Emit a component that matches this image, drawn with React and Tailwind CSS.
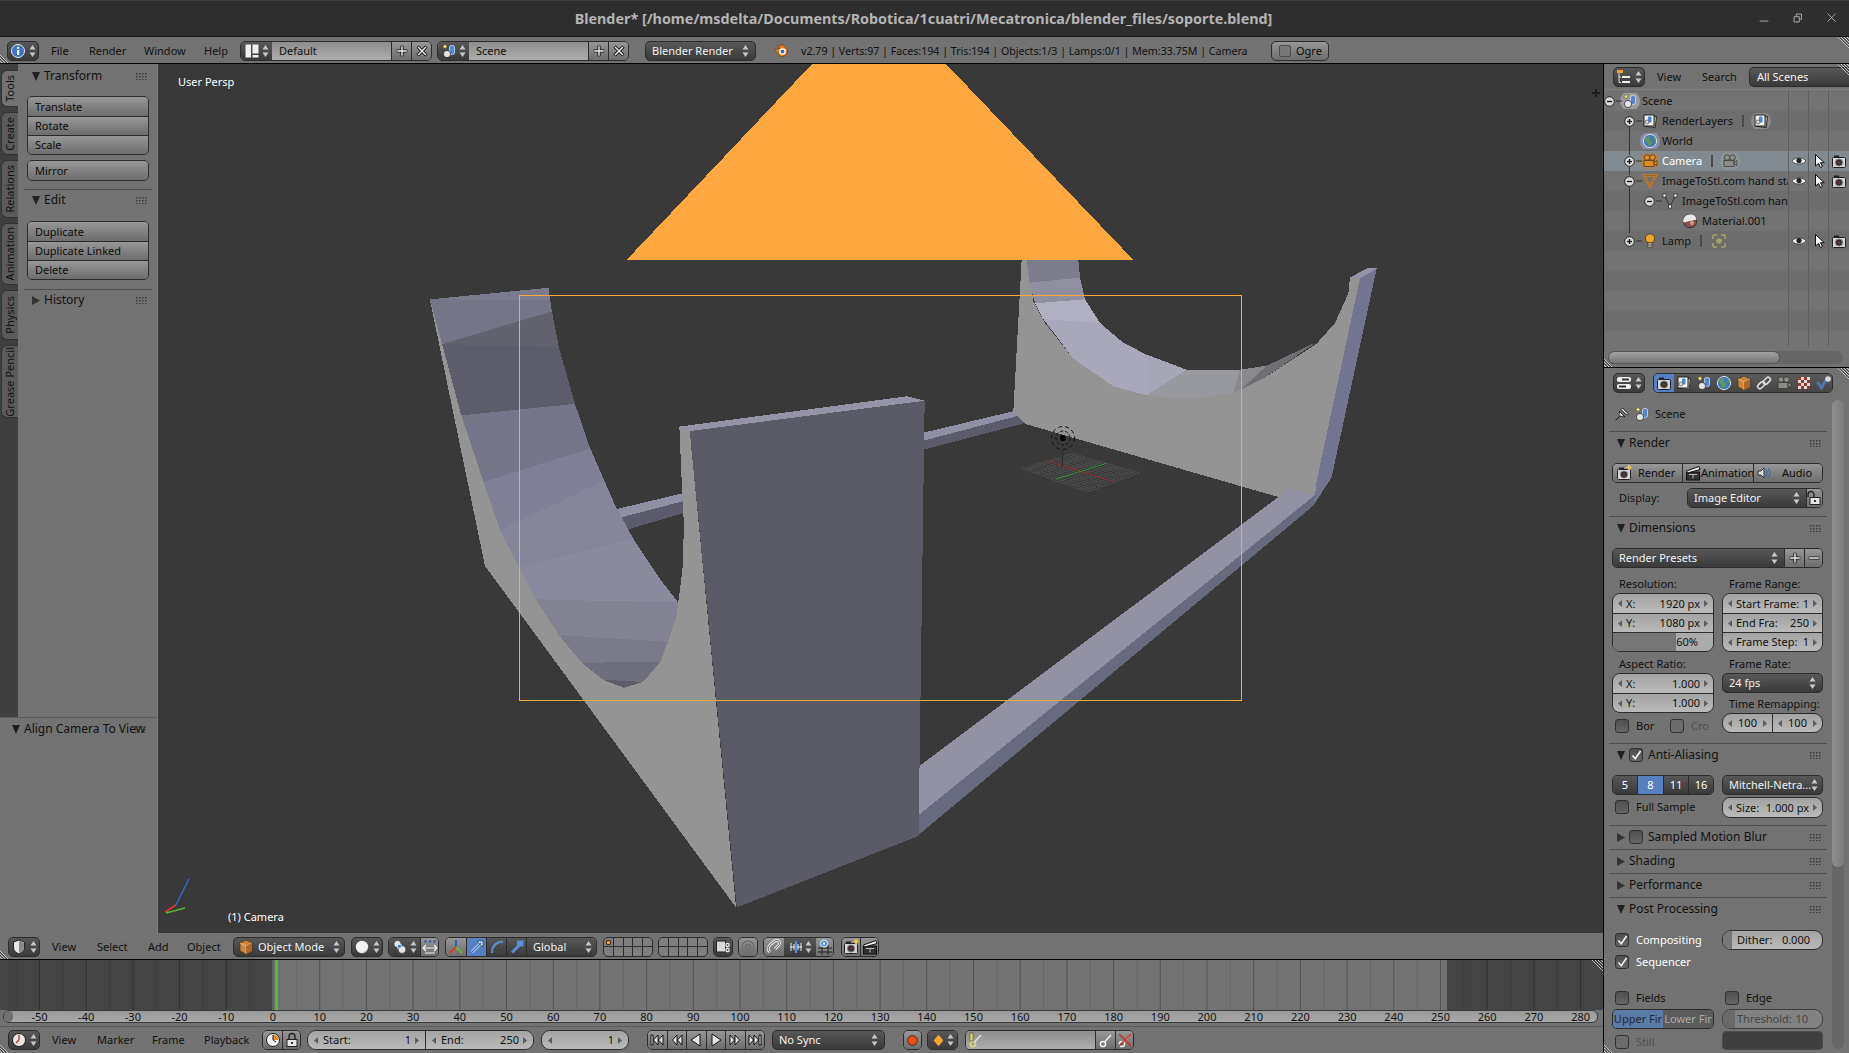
import React from "react";

const BTN = "bg-linear-to-b from-[#979797] to-[#6d6d6d] text-[#0c0c0c]";
const MENU = "bg-linear-to-b from-[#585858] to-[#3a3a3a] text-[#f2f2f2]";
const NUM = "bg-linear-to-b from-[#a3a3a3] to-[#bababa] text-[#111111]";
const TXT = "bg-linear-to-b from-[#8d8d8d] to-[#adadad] text-[#111111]";
const GRP = "flex h-[20px] border border-[#2c2c2c] rounded-[5px] overflow-hidden shrink-0";
const GRPR = "flex h-[20px] border border-[#2c2c2c] rounded-[9px] overflow-hidden shrink-0";
const SEP = "border-l border-[#2c2c2c]";
const CELL = "flex items-center justify-center h-full shrink-0";
const LCELL = "flex items-center h-full shrink-0";

const S = ({ s = 16, w, h, v = "0 0 16 16", c = "", children }) => (
  <svg width={w || s} height={h || s} viewBox={v} className={"shrink-0 " + c}>{children}</svg>
);

const UpDown = ({ c = "#c8c8c8" }) => (
  <S w={7} h={14} v="0 0 7 14"><polygon points="3.5,1 6.5,5.5 0.5,5.5" fill={c} /><polygon points="3.5,13 6.5,8.5 0.5,8.5" fill={c} /></S>
);
const TriD = () => <S w={8} h={9} v="0 0 8 9"><polygon points="0,0 8,0 4,9" fill="#202020" /></S>;
const TriR = () => <S w={8} h={9} v="0 0 8 9"><polygon points="0,0 8,4.5 0,9" fill="#333333" /></S>;
const Dots = () => (
  <S w={12} h={7} v="0 0 12 7">
    {[0, 3, 6, 9].map((x) => [0, 3, 6].map((y) => <rect key={x + "-" + y} x={x} y={y} width="1.5" height="1.5" fill="#3a3a3a" />))}
  </S>
);
const ArrL = ({ c = "#5d5d5d" }) => <S w={4} h={7} v="0 0 4 7"><polygon points="4,0 0,3.5 4,7" fill={c} /></S>;
const ArrR = ({ c = "#5d5d5d" }) => <S w={4} h={7} v="0 0 4 7"><polygon points="0,0 4,3.5 0,7" fill={c} /></S>;

const Info = () => <S><circle cx="8" cy="8" r="6.5" fill="#3f74c4" stroke="#e8e8e8" /><rect x="7" y="7" width="2.2" height="5" fill="#fff" /><rect x="7" y="3.8" width="2.2" height="2" fill="#fff" /></S>;
const Layout = () => <S><rect x="1.5" y="1.5" width="5.5" height="13" fill="#f0f0f0" /><rect x="8.5" y="1.5" width="6" height="9" fill="#f0f0f0" /><rect x="8.5" y="12" width="6" height="2.5" fill="#f0f0f0" /></S>;
const Plus = () => <S s={14}><path d="M8 2v12M2 8h12" stroke="#111" strokeWidth="3.6" /><path d="M8 2.5v11M2.5 8h11" stroke="#eee" strokeWidth="1.6" /></S>;
const Minus = () => <S s={14}><path d="M2 8h12" stroke="#111" strokeWidth="3.6" /><path d="M2.5 8h11" stroke="#eee" strokeWidth="1.6" /></S>;
const Cross = () => <S s={14}><path d="M3 3l10 10M13 3L3 13" stroke="#111" strokeWidth="3.6" /><path d="M3.5 3.5l9 9M12.5 3.5l-9 9" stroke="#eee" strokeWidth="1.6" /></S>;
const SceneI = ({ s = 16 }) => <S s={s}><rect x="8.5" y="2.5" width="5" height="9" rx="2" fill="#4b88d8" stroke="#dbe6f5" strokeWidth=".8" /><circle cx="6" cy="11" r="3.6" fill="#e4e4e4" stroke="#222" strokeWidth=".7" /><circle cx="4" cy="3.5" r="2" fill="#e8dc6a" stroke="#333" strokeWidth=".5" /></S>;
const Logo = () => <S><path d="M1 6.5l6-1.2L4.5 3l5-1.5 4 3.5c2 2.5 1 7-2.6 8.2-3 1-6-.5-6.4-3.7L1 6.5z" fill="#ea7a12" stroke="#4a2a08" strokeWidth=".5" /><circle cx="9.5" cy="8.5" r="3.3" fill="#fff" /><circle cx="9.5" cy="8.5" r="1.9" fill="#2f71b9" /></S>;
const Check = ({ on, dim }) => (
  <span className={"flex items-center justify-center w-[14px] h-[14px] rounded-[3px] border border-[#303030] shrink-0 " + (dim ? "bg-[#6c6c6c]" : "bg-linear-to-b from-[#4e4e4e] to-[#666666]")}>
    {on && <S s={13}><path d="M3 8l3.5 4L13 2.5" fill="none" stroke="#f5f5f5" strokeWidth="2" /></S>}
  </span>
);
const Cam = ({ s = 16, star }) => <S s={s}><rect x="1.5" y="4.5" width="13" height="10" rx="1" fill="#d4d4d4" stroke="#222" /><rect x="3" y="2.5" width="5" height="2.5" fill="#222" /><circle cx="8" cy="9.5" r="3.6" fill="#2c2c2c" stroke="#8c8c8c" /><circle cx="8" cy="9.5" r="1.2" fill="#7a3a34" />{star && <path d="M13 0v5M10.5 2.5h5" stroke="#f2c84b" strokeWidth="1.8" />}</S>;
const Clap = ({ s = 16 }) => <S s={s}><rect x="1.5" y="7" width="13" height="8" fill="#333" stroke="#111" /><path d="M1.5 6L14 1.5 15 4.5 2.5 8z" fill="#eee" stroke="#111" /><path d="M4 9.5h8M8 9.5v4" stroke="#bbb" /></S>;
const Speaker = () => <S><path d="M2 6h3l3-3v10l-3-3H2z" fill="#ddd" stroke="#333" /><path d="M10 5c1.5 1.6 1.5 4.4 0 6M12.3 3.5c2.3 2.6 2.3 6.4 0 9" fill="none" stroke="#3a6fb5" strokeWidth="1.4" /></S>;
const Lock = ({ open }) => <S><rect x="3" y="7.5" width="10" height="7" fill="#e4e4e4" stroke="#222" /><path d={open ? "M1 7V4.5a3 3 0 0 1 6 0V7" : "M5 7.5V4.5a3 3 0 0 1 6 0v3"} fill="none" stroke="#222" strokeWidth="1.4" /><rect x="7" y="10" width="2" height="2" fill="#333" /></S>;
const Pics = ({ s = 16 }) => <S s={s}><rect x="4" y="3" width="10" height="11" fill="#b9ad8f" stroke="#333" transform="rotate(8 9 8)" /><rect x="2" y="2" width="10" height="11" fill="#f1f1f1" stroke="#222" /><rect x="6" y="3.5" width="3.5" height="6" rx="1" fill="#4a86d6" /><circle cx="5" cy="9" r="2" fill="#ddd" stroke="#333" strokeWidth=".6" /></S>;
const Globe = ({ s = 16 }) => <S s={s}><circle cx="8" cy="8" r="6.6" fill="#3f78b8" stroke="#ddd" /><path d="M3 6c2-2 3-3 5-3 1 1-1 3 0 4s3 1 2 3-2 3-3 3-1-3-2-4-2 0-2-3z" fill="#5e9a56" /><path d="M11 4l2 1 1 3-2 0z" fill="#5e9a56" /></S>;
const MovieCam = ({ c = "#e58a1c", s = 16 }) => <S s={s}><circle cx="5" cy="4.5" r="2.8" fill={c} stroke="#332" strokeWidth=".7" /><circle cx="10.5" cy="4.5" r="2.8" fill={c} stroke="#332" strokeWidth=".7" /><rect x="2" y="7.5" width="10" height="6" fill={c} stroke="#332" strokeWidth=".7" /><path d="M12 9l3-1.5v5L12 11z" fill={c} stroke="#332" strokeWidth=".7" /></S>;
const TriMesh = () => <S><path d="M2 2.5h12L8 14z" fill="none" stroke="#e8851c" strokeWidth="2" /><path d="M2 2.5h12L8 14z" fill="none" stroke="#332" strokeWidth=".4" /></S>;
const VMesh = () => <S><path d="M2.5 2.5L8 13.5l5.5-11" fill="none" stroke="#333" /><rect x="1" y="1" width="3" height="3" fill="#fff" stroke="#222" strokeWidth=".7" /><rect x="12" y="1" width="3" height="3" fill="#fff" stroke="#222" strokeWidth=".7" /><rect x="6.5" y="12" width="3" height="3" fill="#fff" stroke="#222" strokeWidth=".7" /></S>;
const Ball = () => <S><circle cx="8" cy="8" r="6.8" fill="#8a4f49" stroke="#333" /><path d="M8 1.2A6.8 6.8 0 0 0 1.4 9.5L14.6 6.5A6.8 6.8 0 0 0 8 1.2z" fill="#e9e9e9" /><circle cx="10" cy="10" r="2" fill="#c99" /></S>;
const Bulb = () => <S><circle cx="8" cy="5.5" r="4.6" fill="#f0a428" stroke="#3a2a10" strokeWidth=".7" /><rect x="5.8" y="10" width="4.4" height="4" fill="#e8e0c8" stroke="#3a2a10" strokeWidth=".7" /><path d="M6 12h4" stroke="#3a2a10" /></S>;
const SunGhost = () => <S><path d="M2 2h4M2 2v4M14 2h-4M14 2v4M2 14h4M2 14v-4M14 14h-4M14 14v-4" stroke="#a5a26a" strokeWidth="1.6" fill="none" /><circle cx="8" cy="8" r="2.8" fill="#a5a26a" /></S>;
const Eye = () => <S><path d="M1 8c3-4 11-4 14 0-3 4-11 4-14 0z" fill="#f2f2f2" stroke="#222" strokeWidth=".6" /><circle cx="8" cy="7.6" r="2.6" fill="#222" /></S>;
const Cursor = () => <S><path d="M4.5 1.5v11.5l3-2.5 2 4 2-1-2-3.8h3.8z" fill="#f4f4f4" stroke="#111" /></S>;
const Exp = ({ plus }) => <S s={11} v="0 0 11 11"><circle cx="5.5" cy="5.5" r="4.8" fill="#d8d8d8" stroke="#222" /><path d="M3 5.5h5" stroke="#111" strokeWidth="1.3" />{plus && <path d="M5.5 3v5" stroke="#111" strokeWidth="1.3" />}</S>;
const Tree = () => <S><rect x="1" y="1" width="6" height="3" fill="#e8a33a" /><path d="M3 4v9.5h2M3 8h2" stroke="#ddd" fill="none" /><rect x="6" y="7" width="8" height="2" fill="#eee" /><rect x="6" y="12" width="8" height="2" fill="#eee" /></S>;
const PropsI = () => <S><rect x="1" y="2" width="14" height="5" rx="2" fill="#eee" /><rect x="1" y="9" width="14" height="5" rx="2" fill="#eee" /><rect x="6" y="3.5" width="7" height="2" fill="#333" /><rect x="3" y="10.5" width="7" height="2" fill="#333" /></S>;
const Cube = ({ s = 16 }) => <S s={s}><path d="M8 1l6 3v8l-6 3-6-3V4z" fill="#c9863e" stroke="#4a3010" strokeWidth=".7" /><path d="M2 4l6 3 6-3M8 7v8" stroke="#f2c58c" fill="none" strokeWidth=".8" /><path d="M8 7l6-3v8l-6 3z" fill="#a9692b" /></S>;
const LinkI = () => <S><rect x="1" y="8" width="8" height="4.5" rx="2.2" transform="rotate(-45 5 10)" fill="none" stroke="#ddd" strokeWidth="1.6" /><rect x="7" y="3.5" width="8" height="4.5" rx="2.2" transform="rotate(-45 11 6)" fill="none" stroke="#ddd" strokeWidth="1.6" /></S>;
const Checker = () => <S>{[0, 1, 2, 3].map((i) => [0, 1, 2, 3].map((j) => <rect key={i + "" + j} x={2 + i * 3} y={2 + j * 3} width="3" height="3" fill={(i + j) % 2 ? "#e8d9d4" : "#8c3a34"} />))}</S>;
const Tick = () => <S><path d="M1.5 7l4 6L11 3" fill="none" stroke="#4c78b8" strokeWidth="2.6" /><circle cx="12" cy="4" r="2.8" fill="#d8d8d8" /></S>;
const Pin = () => <S><path d="M1.5 14.5L7 9M5 5l6 6M7 3.5l5.5 5.5 1.5-1.5L8.5 2z" stroke="#111" fill="#eee" strokeWidth="1" /><path d="M6 6l4 4-3 .5-2-2z" fill="#eee" stroke="#111" strokeWidth=".8" /></S>;
const Shield = () => <S><path d="M2.5 3l5.5-2 5.5 2v6c0 3-3 5-5.5 6-2.5-1-5.5-3-5.5-6z" fill="#e8e8e8" stroke="#222" /><path d="M8 1.5v13c2.5-1 5-3 5-5.5V3.4z" fill="#8c8c8c" /></S>;
const Sphere = () => <S><circle cx="8" cy="8" r="6.2" fill="#f2f2f2" /><path d="M8 14.2A6.2 6.2 0 0 0 14.2 8c-1 3-4 5-6.2 6.2z" fill="#aaa" /></S>;
const PivotI = () => <S><circle cx="5.5" cy="5" r="3.6" fill="#e4e4e4" stroke="#222" strokeWidth=".6" /><circle cx="10" cy="10.5" r="3.9" fill="#e4e4e4" stroke="#222" strokeWidth=".6" /><rect x="5.5" y="5.5" width="3.6" height="3.6" fill="#3a7fd6" stroke="#fff" strokeWidth=".6" /></S>;
const Spread = () => <S><circle cx="3.5" cy="2.5" r="1.3" fill="#3a5fa0" /><circle cx="8" cy="2.5" r="1.3" fill="#3a5fa0" /><circle cx="12.5" cy="2.5" r="1.3" fill="#3a5fa0" /><path d="M1 9h14M1 9l3-3M1 9l3 3M15 9l-3-3M15 9l-3 3M3 14h10" stroke="#f4f4f4" strokeWidth="1.2" fill="none" /></S>;
const Axes = () => <S><path d="M8 8V1" stroke="#2f5fc2" strokeWidth="2" /><path d="M8 8l-6 6" stroke="#d43c2a" strokeWidth="2" /><path d="M8 8l6 6" stroke="#6cb62c" strokeWidth="2" /></S>;
const ArrowI = () => <S><path d="M3 13L12 4" stroke="#d9e8ff" strokeWidth="3" /><path d="M8 2h6v6z" fill="#d9e8ff" stroke="#123" strokeWidth=".6" /><path d="M3 13L12 4" stroke="#2f5fc2" strokeWidth="1.2" /></S>;
const RotI = () => <S><path d="M3 14C3 7 7 3 14 2.5" fill="none" stroke="#5d8fd4" strokeWidth="2" /></S>;
const ScaleI = () => <S><path d="M3 13.5L10 6.5" stroke="#5d8fd4" strokeWidth="3" /><rect x="8" y="1.5" width="6.5" height="6" fill="#5d8fd4" /></S>;
const LockCam = () => <S><rect x="1.5" y="2" width="9" height="11" fill="#d8d8d8" stroke="#222" /><path d="M11 5a2 2 0 0 1 3 0v2a2 2 0 0 1-3 0zM11 10a2 2 0 0 1 3 0v2a2 2 0 0 1-3 0z" fill="none" stroke="#eee" strokeWidth="1.2" /></S>;
const Prop = () => <S><circle cx="8" cy="8" r="6" fill="none" stroke="#6e6e6e" strokeWidth="1.6" /><circle cx="8" cy="8" r="3" fill="#787878" stroke="#6a6a6a" /></S>;
const Magnet = () => <S><path d="M4 13l-1.5-1.5c-1-2 0-4 2-6L8 2.5c2-1.5 4-1.5 5 0s.5 3-1 4.5L9 10" fill="none" stroke="#e2e2e2" strokeWidth="3" /><path d="M4 13l-1.5-1.5c-1-2 0-4 2-6L8 2.5c2-1.5 4-1.5 5 0s.5 3-1 4.5L9 10" fill="none" stroke="#333" strokeWidth=".7" /></S>;
const Snap = () => <S><path d="M2 8h12" stroke="#eee" /><path d="M3 4v8M6 5v6M10 5v6M13 4v8" stroke="#eee" /><rect x="7" y="2" width="2" height="12" fill="#4a8fe8" /></S>;
const SnapT = () => <S><path d="M1 9h14M1 13h14M5 6v10M11 6v10" stroke="#222" /><circle cx="7" cy="4.5" r="3.6" fill="#4a8fe8" stroke="#eee" /><circle cx="7" cy="4.5" r="1.2" fill="#fff" /></S>;
const Clock = () => <S><circle cx="8" cy="8" r="6.5" fill="#f2f2f2" stroke="#222" /><path d="M8 8V2.5A5.5 5.5 0 0 1 13.5 8z" fill="#f08c1e" /><path d="M8 8V3M8 8l3 2" stroke="#222" /></S>;
const ClockDark = () => <S><circle cx="8" cy="8" r="6.5" fill="#e8e8e8" stroke="#222" /><path d="M8 8V3M8 8l-3 3" stroke="#b33" strokeWidth="1.4" /></S>;
const Tr = ({ d }) => <S s={16} v="0 0 16 16"><path d={d} fill="#e6e6e6" stroke="#111" strokeWidth="1" /></S>;
const Key = () => <S><circle cx="5" cy="12" r="2.6" fill="none" stroke="#e2d66d" strokeWidth="1.5" /><path d="M6.5 10L13 3" stroke="#ddd" strokeWidth="1.6" /><rect x="2" y="1" width="3" height="8" fill="#e2d66d" stroke="#333" strokeWidth=".5" /></S>;
const KeyAdd = () => <S><circle cx="5" cy="12" r="2.6" fill="none" stroke="#eee" strokeWidth="1.5" /><path d="M6.5 10L13 3" stroke="#eee" strokeWidth="1.6" /></S>;
const KeyDel = () => <S><circle cx="5" cy="12" r="2.6" fill="none" stroke="#eee" strokeWidth="1.5" /><path d="M6.5 10L13 3" stroke="#eee" strokeWidth="1.6" /><path d="M2 2l12 12M14 2L2 14" stroke="#c8322a" strokeWidth="1.6" /></S>;

const Hatch = ({ pos, flip }) => (
  <svg width="11" height="11" viewBox="0 0 11 11" className={"absolute " + pos}>
    {flip
      ? <g stroke="#e0e0e0" strokeWidth=".8"><path d="M0 3l8 8M0 6l5 5M0 9l2 2" /><path d="M0 4l7 7M0 7l4 4" stroke="#333" /></g>
      : <g stroke="#e0e0e0" strokeWidth=".8"><path d="M0 0l11 11M3 0l8 8M6 0l5 5M9 0l2 2" /><path d="M1 0l10 10M4 0l7 7M7 0l4 4" stroke="#333" /></g>}
  </svg>
);

const EditorBtn = ({ children }) => (
  <div className={"flex items-center justify-center gap-[3px] w-[32px] h-[20px] rounded-[5px] border border-[#2c2c2c] shrink-0 " + MENU}>
    {children}<UpDown />
  </div>
);
const Dropdown = ({ cls, icon, label }) => (
  <div className={"flex items-center h-[20px] rounded-[5px] border border-[#2c2c2c] shrink-0 whitespace-nowrap " + MENU + " " + cls}>
    {icon}<span className="flex-1">{label}</span><UpDown />
  </div>
);
const Item = ({ cls, children }) => <div className={"shrink-0 text-[#111111] " + cls}>{children}</div>;

function IdBlock({ icon, label, txtW }) {
  return (
    <div className={GRP + " w-[192px]"}>
      <div className={CELL + " w-[31px] gap-[2px] " + MENU}>{icon}<UpDown /></div>
      <div className={LCELL + " pl-[7px] " + TXT + " " + txtW}>{label}</div>
      <div className={CELL + " w-[20px] " + BTN + " " + SEP}><Plus /></div>
      <div className={CELL + " w-[20px] " + BTN + " " + SEP}><Cross /></div>
    </div>
  );
}

function TitleBar() {
  return (
    <div className="relative flex items-center justify-center h-[37px] bg-[#2e2e2e] border-t border-t-[#3c3c3c] border-b border-b-[#151515] shrink-0">
      <span className="text-[14.35px] font-bold text-[#b4b4b4] font-['Noto_Sans',sans-serif] whitespace-nowrap pr-[2px]">
        Blender* [/home/msdelta/Documents/Robotica/1cuatri/Mecatronica/blender_files/soporte.blend]
      </span>
      <div className="absolute right-[10px] top-[10px] flex items-center gap-[20px]">
        <S s={14}><path d="M3 11.5h10" stroke="#b8b8b8" strokeWidth="1" /></S>
        <S s={14}><path d="M3.5 6.5h6v6h-6zM6 6V3.5h6v6H10" fill="none" stroke="#b8b8b8" strokeWidth="1" /></S>
        <S s={14}><path d="M3 3l9 9M12 3l-9 9" stroke="#b8b8b8" strokeWidth="1" /></S>
      </div>
    </div>
  );
}

function InfoBar() {
  return (
    <div className="relative flex items-center h-[26px] pt-[2px] bg-[#727272] shrink-0">
      <Hatch pos="left-0 bottom-0" flip />
      <Hatch pos="right-0 top-0" />
      <div className="ml-[7px]"><EditorBtn><Info /></EditorBtn></div>
      <Item cls="ml-[12px] w-[38px]">File</Item>
      <Item cls="w-[55px]">Render</Item>
      <Item cls="w-[60px]">Window</Item>
      <Item cls="w-[36px]">Help</Item>
      <IdBlock icon={<Layout />} label="Default" txtW="w-[119px]" />
      <div className="ml-[5px]"><IdBlock icon={<SceneI />} label="Scene" txtW="w-[119px]" /></div>
      <div className="ml-[16px]"><Dropdown cls="w-[111px] px-[6px]" label="Blender Render" /></div>
      <div className="ml-[17px]"><Logo /></div>
      <Item cls="ml-[12px] w-[470px] whitespace-nowrap text-[10.63px]">v2.79 | Verts:97 | Faces:194 | Tris:194 | Objects:1/3 | Lamps:0/1 | Mem:33.75M | Camera</Item>
      <div className={"flex items-center w-[58px] h-[20px] rounded-[5px] border border-[#2c2c2c] pl-[7px] gap-[5px] " + BTN}>
        <span className="w-[12px] h-[12px] border border-[#4a4a4a] bg-[#777777] rounded-[2px]" />Ogre
      </div>
    </div>
  );
}

const Tab = ({ cls, on, children }) => (
  <div className={"flex items-center justify-center w-[17px] ml-[1px] rounded-l-[6px] border border-r-0 border-[#333333] text-[#111111] " + (on ? "bg-[#727272] " : "bg-[#5b5b5b] ") + cls}>
    <span className="[writing-mode:vertical-rl] rotate-180 whitespace-nowrap text-[11px]">{children}</span>
  </div>
);
const PanelHead = ({ open, label, check }) => (
  <div className="relative flex items-center h-[20px] pl-[5px] text-[12px] text-[#111111] shrink-0 whitespace-nowrap">
    {open ? <TriD /> : <TriR />}
    {check !== undefined && <span className="ml-[4px] -mr-[1px]"><Check on={check} /></span>}
    <span className={check !== undefined ? "ml-[6px]" : "ml-[4px]"}>{label}</span>
    <span className="absolute right-[1px] top-[7px]"><Dots /></span>
  </div>
);
const Line = ({ cls }) => <div className={"h-px bg-[#4e4e4e] shrink-0 " + cls} />;
const BtnStack = ({ labels, cls }) => (
  <div className={"flex flex-col border border-[#2c2c2c] rounded-[5px] overflow-hidden shrink-0 " + cls}>
    {labels.map((l, i) => (
      <div key={l} className={"flex items-center h-[19px] pl-[7px] " + BTN + (i ? " border-t border-[#2c2c2c]" : "")}>{l}</div>
    ))}
  </div>
);

function ToolShelf() {
  return (
    <div className="flex flex-col w-[158px] shrink-0 h-full">
      <div className="flex flex-1 min-h-0">
        <div className="flex flex-col w-[18px] bg-[#404040] pt-[6px] gap-[5px] overflow-hidden">
          <Tab cls="h-[37px]" on>Tools</Tab>
          <Tab cls="h-[43px]">Create</Tab>
          <Tab cls="h-[58px]">Relations</Tab>
          <Tab cls="h-[62px]">Animation</Tab>
          <Tab cls="h-[50px]">Physics</Tab>
          <Tab cls="h-[73px]">Grease Pencil</Tab>
        </div>
        <div className="w-[140px] bg-[#727272] border-r border-[#808080] pl-[9px] pr-[8px] pt-[2px] flex flex-col">
          <PanelHead open label="Transform" />
          <BtnStack cls="mt-[10px]" labels={["Translate", "Rotate", "Scale"]} />
          <BtnStack cls="mt-[5px]" labels={["Mirror"]} />
          <Line cls="mt-[8px] -ml-[3px] -mr-[3px]" />
          <PanelHead open label="Edit" />
          <BtnStack cls="mt-[11px]" labels={["Duplicate", "Duplicate Linked", "Delete"]} />
          <Line cls="mt-[9px] -ml-[3px] -mr-[3px]" />
          <PanelHead label="History" />
        </div>
      </div>
      <div className="h-[216px] bg-[#727272] border-t border-[#5c5c5c] border-r-[#808080] border-r pl-[7px] pr-[9px] pt-[1px]">
        <PanelHead open label="Align Camera To View" />
      </div>
    </div>
  );
}

const za = (pts) => pts.map(([x, y]) => `${400 + x / 2.613},${240 + y / 2.24}`).join(" ");
const zb = (pts) => pts.map(([x, y]) => `${900 + x / 3},${240 + y / 2.529}`).join(" ");

function Scene3D() {
  const gridLines = [];
  const A = [1021.7, 468.5], B = [1073, 453.5], C = [1140, 473], D = [1087, 492];
  const mix = (p, q, t) => [p[0] + (q[0] - p[0]) * t, p[1] + (q[1] - p[1]) * t];
  for (let i = 0; i <= 16; i++) {
    const t = i / 16;
    const p1 = mix(A, B, t), p2 = mix(D, C, t), p3 = mix(A, D, t), p4 = mix(B, C, t);
    gridLines.push(<line key={"g" + i} x1={p1[0]} y1={p1[1]} x2={p2[0]} y2={p2[1]} stroke="#4f4f4f" strokeWidth=".7" />);
    gridLines.push(<line key={"h" + i} x1={p3[0]} y1={p3[1]} x2={p4[0]} y2={p4[1]} stroke="#4f4f4f" strokeWidth=".7" />);
  }
  return (
    <svg className="absolute inset-0 w-full h-full" viewBox="158 64 1445 869" shapeRendering="crispEdges">
      {gridLines}
      <line x1="1048" y1="460.6" x2="1113" y2="482" stroke="#8a2a2a" strokeWidth="1" />
      <line x1="1056" y1="479" x2="1106" y2="463.4" stroke="#2f8a2f" strokeWidth="1" />
      {/* back rails */}
      <polygon points={za([[565, 603], [740, 567], [740, 585], [575, 622]])} fill="#9090a4" />
      <polygon points={za([[575, 622], [740, 585], [740, 612], [596, 648]])} fill="#5b5b6c" />
      <polygon points={zb([[72, 487], [340, 433], [375, 440], [72, 507]])} fill="#9090a4" />
      <polygon points={zb([[72, 507], [375, 440], [375, 463], [72, 530]])} fill="#5b5b6c" />
      {/* right wall */}
      <polygon points={zb([[1350, 95], [1400, 72], [1430, 72], [1380, 97]])} fill="#9494a6" />
      <polygon points={zb([[1380, 97], [1430, 72], [1295, 600], [1240, 672], [1245, 645], [1250, 610]])} fill="#737590" />
      <polygon points={zb([[365, 50], [380, 50], [400, 155], [435, 210], [520, 300], [640, 370], [740, 393], [870, 403], [1000, 387], [1100, 345], [1250, 262], [1305, 210], [1345, 135], [1350, 95], [1380, 97], [1250, 610], [1245, 645], [1165, 628], [1135, 650], [375, 465], [340, 433]])} fill="#949494" />
      <polygon points={zb([[380, 50], [535, 50], [540, 95], [388, 108]])} fill="#7d7d8c" />
      <polygon points={zb([[388, 108], [540, 95], [555, 150], [405, 160]])} fill="#8f8f9f" />
      <polygon points={zb([[405, 160], [555, 150], [600, 210], [430, 200]])} fill="#b0b0c2" />
      <polygon points={zb([[430, 200], [600, 210], [670, 260], [740, 290], [740, 393], [640, 370], [520, 300]])} fill="#a8a8ba" />
      <polygon points={zb([[740, 290], [860, 328], [740, 393]])} fill="#a6a6b6" />
      <polygon points={zb([[740, 393], [860, 328], [1020, 328], [1000, 387], [870, 403]])} fill="#98989f" />
      <polygon points={zb([[1000, 387], [1020, 328], [1100, 318], [1100, 345]])} fill="#8a8a8e" />
      <polygon points={zb([[1020, 380], [1100, 318], [1250, 258], [1100, 345]])} fill="#707074" />
      {/* front rail */}
      <polygon points={zb([[55, 1332], [1135, 650], [1165, 628], [1245, 645], [55, 1455]])} fill="#9292a4" />
      <polygon points={zb([[55, 1455], [1245, 645], [1240, 672], [55, 1505]])} fill="#686a80" />
      {/* left wing */}
      <polygon points={za([[78, 133], [222, 730], [878, 1495], [757, 428], [730, 418], [735, 520], [742, 640], [738, 740], [727, 812], [722, 845], [700, 900], [680, 945], [635, 990], [585, 1003], [530, 985], [475, 947], [415, 885], [355, 805], [312, 735], [262, 650], [218, 542], [160, 393], [110, 233]])} fill="#949494" />
      <polygon points={za([[78, 133], [388, 107], [397, 160], [110, 233]])} fill="#747587" />
      <polygon points={za([[78, 133], [388, 107], [392, 135]])} fill="#7a7b8e" />
      <polygon points={za([[110, 233], [397, 160], [415, 240], [457, 367], [160, 393]])} fill="#5c5c6a" />
      <polygon points={za([[110, 233], [397, 160], [415, 240]])} fill="#62626f" />
      <polygon points={za([[160, 393], [457, 367], [497, 467], [218, 542]])} fill="#757689" />
      <polygon points={za([[218, 542], [497, 467], [560, 590], [610, 670], [312, 735], [262, 650]])} fill="#85859a" />
      <polygon points={za([[218, 542], [497, 467], [530, 540], [262, 650]])} fill="#7f7f95" />
      <polygon points={za([[312, 735], [610, 670], [680, 760], [727, 812], [355, 805]])} fill="#8a8a9e" />
      <polygon points={za([[355, 805], [727, 812], [722, 845], [700, 900], [415, 885]])} fill="#828292" />
      <polygon points={za([[415, 885], [700, 900], [680, 945], [475, 947]])} fill="#7a7a8a" />
      <polygon points={za([[475, 947], [680, 945], [635, 990], [530, 985]])} fill="#6e6e7c" />
      <polygon points={za([[530, 985], [635, 990], [585, 1003]])} fill="#5d5d6a" />
      {/* slab */}
      <polygon points={za([[730, 418], [1325, 350], [1371, 360], [757, 428]])} fill="#9494a6" />
      <polygon points={za([[757, 428], [1371, 360], [1355, 1335], [880, 1495]])} fill="#5b5b67" />
      {/* camera */}
      <polygon points="812,64 946,64 1133,259.5 627,259.5" fill="#ffa83f" />
      <rect x="519.5" y="295.5" width="722" height="405" fill="none" stroke="#ffa83f" strokeWidth="1" />
      {/* lamp */}
      <g fill="none" stroke="#111" strokeWidth="1" shapeRendering="auto">
        <circle cx="1063" cy="438" r="7" strokeDasharray="3 2" />
        <circle cx="1063" cy="438" r="11.5" strokeDasharray="4 3" />
      </g>
      <circle cx="1063" cy="438" r="3" fill="#000" shapeRendering="auto" />
      <line x1="1062" y1="450" x2="1062" y2="466" stroke="#2a2a2a" />
      {/* axis */}
      <g shapeRendering="auto">
        <line x1="176" y1="905" x2="189" y2="879" stroke="#3a66c8" strokeWidth="1.6" />
        <line x1="176" y1="905" x2="165" y2="912" stroke="#d83c2a" strokeWidth="1.6" />
        <line x1="166" y1="913" x2="185" y2="908" stroke="#58b03a" strokeWidth="1.6" />
      </g>
      <line x1="1592" y1="93" x2="1600" y2="93" stroke="#1e1e1e" strokeWidth="2" />
      <line x1="1596" y1="89" x2="1596" y2="97" stroke="#1e1e1e" strokeWidth="2" />
    </svg>
  );
}

function Viewport() {
  return (
    <div className="relative flex-1 bg-[#393939] overflow-hidden">
      <Scene3D />
      <div className="absolute left-[20px] top-[11px] text-white">User Persp</div>
      <div className="absolute left-[70px] bottom-[9px] text-white">(1) Camera</div>
    </div>
  );
}

const LayerGrid = ({ cls, dot }) => (
  <div className={"relative grid grid-cols-5 grid-rows-2 h-[20px] border border-[#2c2c2c] rounded-[5px] overflow-hidden bg-[#2c2c2c] gap-px shrink-0 " + cls}>
    {Array.from({ length: 10 }).map((_, i) => <div key={i} className="bg-[#7e7e7e]" />)}
    {dot && <span className="absolute left-[2px] top-[2px] w-[5px] h-[5px] bg-[#e89a3c] border border-[#4a2a08] rounded-[1px]" />}
  </div>
);

function Header3D() {
  return (
    <div className="relative flex items-center h-[26px] pt-[1px] bg-[#727272] shrink-0">
      <Hatch pos="left-0 bottom-0" flip />
      <div className="ml-[8px]"><EditorBtn><Shield /></EditorBtn></div>
      <Item cls="ml-[12px] w-[45px]">View</Item>
      <Item cls="w-[51px]">Select</Item>
      <Item cls="w-[39px]">Add</Item>
      <Item cls="w-[46px]">Object</Item>
      <Dropdown cls="w-[112px] gap-[4px] px-[4px]" icon={<Cube />} label="Object Mode" />
      <div className="ml-[6px]"><EditorBtn><Sphere /></EditorBtn></div>
      <div className={"ml-[5px] w-[51px] " + GRP}>
        <div className={CELL + " w-[31px] gap-[2px] " + MENU}><PivotI /><UpDown /></div>
        <div className={CELL + " flex-1 " + BTN + " " + SEP}><Spread /></div>
      </div>
      <div className={"ml-[6px] w-[152px] " + GRP}>
        <div className={CELL + " w-[20px] " + BTN}><Axes /></div>
        <div className={CELL + " w-[20px] bg-[#5680c2] " + SEP}><ArrowI /></div>
        <div className={CELL + " w-[20px] " + MENU + " " + SEP}><RotI /></div>
        <div className={CELL + " w-[20px] " + MENU + " " + SEP}><ScaleI /></div>
        <div className={"flex items-center justify-between h-full flex-1 pl-[6px] pr-[4px] " + MENU + " " + SEP}>Global<UpDown /></div>
      </div>
      <LayerGrid cls="ml-[6px] w-[50px]" dot />
      <LayerGrid cls="ml-[5px] w-[50px]" />
      <div className={"ml-[5px] w-[20px] " + GRP}><div className={CELL + " w-full " + MENU}><LockCam /></div></div>
      <div className={"ml-[5px] w-[20px] " + GRP}><div className={CELL + " w-full " + BTN}><Prop /></div></div>
      <div className={"ml-[5px] w-[71px] " + GRP}>
        <div className={CELL + " w-[20px] " + BTN}><Magnet /></div>
        <div className={CELL + " w-[32px] gap-[1px] " + MENU}><Snap /><UpDown /></div>
        <div className={CELL + " flex-1 " + BTN}><SnapT /></div>
      </div>
      <div className={"ml-[7px] w-[38px] " + GRP}>
        <div className={CELL + " w-[18px] " + BTN}><Cam star /></div>
        <div className={CELL + " flex-1 " + BTN + " " + SEP}><Clap /></div>
      </div>
    </div>
  );
}

const X0 = 273, PF = 4.67;
const TICKS = Array.from({ length: 34 }, (_, i) => -50 + i * 10);

function Timeline() {
  const lines = [];
  for (let f = -55; f <= 285; f += 5) {
    const x = X0 + f * PF;
    lines.push(<line key={f} x1={x} y1="0" x2={x} y2="50" stroke={f % 10 === 0 ? "rgba(0,0,0,0.28)" : "rgba(0,0,0,0.1)"} strokeWidth="1" />);
  }
  return (
    <div className="shrink-0">
      <div className="h-px bg-black" />
      <div className="relative flex h-[50px] bg-[#727272]">
        <div className="w-[272px] bg-[#444444] shrink-0" />
        <div className="flex-1" />
        <div className="w-[156px] bg-[#444444] shrink-0" />
        <svg className="absolute inset-0 w-full h-full" viewBox="0 0 1603 50">{lines}</svg>
        <div className="absolute left-[275px] top-0 bottom-0 w-[3px] bg-[#58b83a]" />
        <Hatch pos="right-0 top-0" />
      </div>
      <div className="bg-[#727272] h-[13px]">
        <div className={"relative h-[13px] ml-[3px] mr-[5px] rounded-[6px] border border-[#3a3a3a] overflow-visible bg-linear-to-b from-[#9a9a9a] to-[#a8a8a8]"}>
          <div className="absolute left-0 top-0 bottom-0 w-[9px] rounded-full bg-[#707070]" />
          {TICKS.map((t) => (
            <span key={t} className="absolute top-0 leading-[11px] -translate-x-1/2 text-[11px] text-[#111111]" style={{ left: X0 - 3 - 1 + t * PF }}>{t}</span>
          ))}
        </div>
      </div>
      <div className="h-[4px] bg-[#727272] border-b border-[#5c5c5c]" />
    </div>
  );
}

function HeaderTime() {
  const T = [
    "M2 3v10h2V3zM9 3L4.5 8 9 13zM14 3L9.5 8l4.5 5z",
    "M8 3L3.5 8 8 13zM13 3L8.5 8l4.5 5z",
    "M12 2L3 8l9 6z",
    "M4 2l9 6-9 6z",
    "M3 3l4.5 5L3 13zM8 3l4.5 5L8 13z",
    "M12 3v10h2V3zM2 3l4.5 5L2 13zM7 3l4.5 5L7 13z",
  ];
  return (
    <div className="relative flex items-center h-[26px] bg-[#727272] shrink-0">
      <Hatch pos="left-0 bottom-0" flip />
      <div className="ml-[8px]"><EditorBtn><ClockDark /></EditorBtn></div>
      <Item cls="ml-[12px] w-[45px]">View</Item>
      <Item cls="w-[55px]">Marker</Item>
      <Item cls="w-[52px]">Frame</Item>
      <Item cls="w-[58px]">Playback</Item>
      <div className={"w-[39px] " + GRP}>
        <div className={CELL + " w-[19px] " + BTN}><Clock /></div>
        <div className={CELL + " flex-1 " + BTN + " " + SEP}><Lock /></div>
      </div>
      <div className={"ml-[6px] w-[227px] " + GRPR}>
        <div className={"flex items-center w-[117px] h-full px-[6px] shrink-0 " + NUM}><ArrL /><span className="ml-[5px]">Start:</span><span className="ml-auto">1</span><span className="ml-[4px]"><ArrR /></span></div>
        <div className={"flex items-center flex-1 h-full px-[6px] " + NUM + " " + SEP}><ArrL /><span className="ml-[5px]">End:</span><span className="ml-auto">250</span><span className="ml-[4px]"><ArrR /></span></div>
      </div>
      <div className={"ml-[7px] w-[88px] " + GRPR}>
        <div className={"flex items-center w-full h-full px-[6px] " + NUM}><ArrL /><span className="ml-auto">1</span><span className="ml-[4px]"><ArrR /></span></div>
      </div>
      <div className={"ml-[18px] w-[118px] " + GRP}>
        {T.map((d, i) => <div key={i} className={CELL + " flex-1 " + BTN + (i ? " " + SEP : "")}><Tr d={d} /></div>)}
      </div>
      <div className="ml-[7px]"><Dropdown cls="w-[113px] px-[6px]" label="No Sync" /></div>
      <div className={"ml-[18px] w-[19px] " + GRP}><div className={CELL + " w-full " + BTN}><S s={13}><circle cx="8" cy="8" r="6" fill="#e0501e" stroke="#4a1408" /></S></div></div>
      <div className={"ml-[5px] w-[31px] " + GRP}>
        <div className={CELL + " w-full gap-[2px] " + MENU}><S s={13}><polygon points="8,1 14,8 8,15 2,8" fill="#f2a62c" /></S><UpDown /></div>
      </div>
      <div className={"ml-[7px] w-[169px] " + GRP}>
        <div className={"flex items-center w-[129px] h-full pl-[2px] shrink-0 " + TXT}><Key /></div>
        <div className={CELL + " w-[20px] " + BTN + " " + SEP}><KeyAdd /></div>
        <div className={CELL + " flex-1 " + BTN + " " + SEP}><KeyDel /></div>
      </div>
    </div>
  );
}

const Halo = ({ c, children }) => <span className={"flex -m-[2px] p-[2px] rounded-full " + c}>{children}</span>;

const ORows = [
  { h: "pl-0", exp: "minus", icon: <Halo c="bg-[#9c9c9c]"><SceneI /></Halo>, t: "Scene" },
  { h: "pl-[20px]", exp: "plus", icon: <Pics />, t: "RenderLayers", extra: <Halo c="bg-[#8c8c8c]"><Pics /></Halo> },
  { h: "pl-[38px]", icon: <Halo c="bg-[#8d8da8]"><Globe /></Halo>, t: "World" },
  { h: "pl-[20px]", exp: "plus", icon: <Halo c="bg-[#a8845e]"><MovieCam /></Halo>, t: "Camera", extra: <Halo c="bg-[#8e969b]"><MovieCam c="#8d8d8d" /></Halo>, sel: true, ctl: true },
  { h: "pl-[20px]", exp: "minus", icon: <TriMesh />, t: "ImageToStl.com hand stand", ctl: true },
  { h: "pl-[40px]", exp: "minus", icon: <VMesh />, t: "ImageToStl.com hand stand" },
  { h: "pl-[78px]", icon: <Ball />, t: "Material.001" },
  { h: "pl-[20px]", exp: "plus", icon: <Bulb />, t: "Lamp", extra: <SunGhost />, ctl: true },
  {}, {}, {}, {}, {},
];

function Outliner() {
  return (
    <div className="flex flex-col h-[303px] shrink-0 bg-[#727272]">
      <div className="relative flex items-center h-[26px] pt-[1px] border-b border-[#808080] shrink-0">
        <Hatch pos="right-0 top-0" />
        <div className="ml-[9px]"><EditorBtn><Tree /></EditorBtn></div>
        <Item cls="ml-[12px] w-[45px]">View</Item>
        <Item cls="w-[47px]">Search</Item>
        <div className={"flex-1 h-[20px] rounded-l-[5px] border border-r-0 border-[#2c2c2c] pl-[7px] flex items-center " + MENU}>All Scenes</div>
      </div>
      <div className="relative h-[259px] pt-[1px] overflow-hidden">
        {ORows.map((r, i) => (
          <div key={i} className={"flex items-center h-[20px] " + (r.sel ? "bg-[#808a90]" : i % 2 ? "bg-[#6d6d6d]" : "bg-[#727272]")}>
            <div className={"flex items-center w-[184px] overflow-hidden whitespace-nowrap shrink-0 " + (r.h || "")}>
              {r.exp && <Exp plus={r.exp === "plus"} />}
              {r.icon && <span className={r.exp ? "ml-[7px]" : ""}>{r.icon}</span>}
              {r.t && <span className={"ml-[4px] " + (r.sel ? "text-white" : "text-[#111111]")}>{r.t}</span>}
              {r.extra && <span className="w-[2px] h-[12px] bg-[#4a4a4a] mx-[9px] shrink-0" />}
              {r.extra}
            </div>
            {r.ctl && (
              <div className="flex items-center pl-[3px] gap-[4px]"><Eye /><Cursor /><Cam /></div>
            )}
          </div>
        ))}
        <svg className="absolute inset-0 w-full h-full" viewBox="0 0 245 259">
          <path d="M184.5 0v257M204.5 0v257M224.5 0v257" stroke="#5e5e5e" />
          <path d="M25.5 37v28M25.5 77v8M25.5 97v46M12 11h6M32 31h6M32 71h6M32 91h6M32 151h6M52 111h6" stroke="#333333" />
        </svg>
      </div>
      <div className="relative h-[18px] shrink-0">
        <div className="absolute left-[4px] right-[6px] top-[2px] h-[13px] rounded-full bg-[#666666]">
          <div className="w-[172px] h-full rounded-full bg-linear-to-b from-[#a2a2a2] to-[#777777] border border-[#555555]" />
        </div>
        <Hatch pos="left-0 bottom-0" flip />
      </div>
    </div>
  );
}

const Num = ({ label, value, sep }) => (
  <div className={"flex items-center h-[19px] px-[5px] whitespace-nowrap " + NUM + (sep ? " border-t border-[#2c2c2c]" : "")}>
    <ArrL /><span className="ml-[4px]">{label}</span><span className="ml-auto">{value}</span><span className="ml-[4px]"><ArrR /></span>
  </div>
);
const NumGroup = ({ children, cls = "" }) => (
  <div className={"flex flex-col border border-[#2c2c2c] rounded-[8px] overflow-hidden " + cls}>{children}</div>
);
const CheckRow = ({ on, label, cls = "", white, dim }) => (
  <div className={"flex items-center pl-[3px] gap-[7px] h-[20px] whitespace-nowrap " + cls}>
    <Check on={on} dim={dim} /><span className={white ? "text-white" : dim ? "text-[#4e4e4e]" : "text-[#111111]"}>{label}</span>
  </div>
);
const Label = ({ children }) => <div className="h-[16px] pl-[7px] flex items-center text-[#111111] whitespace-nowrap">{children}</div>;
const TabIco = ({ on, children }) => (
  <div className={CELL + " w-[20px] " + (on ? "bg-[#5680c2]" : "bg-linear-to-b from-[#5a5a5a] to-[#454545]")}>{children}</div>
);

function Properties() {
  return (
    <div className="relative flex flex-col flex-1 min-h-0 bg-[#727272] overflow-hidden">
      <Hatch pos="right-0 top-0" />
      <Hatch pos="left-0 bottom-0" flip />
      <div className="flex items-center h-[27px] pt-[2px] shrink-0">
        <div className="ml-[9px]"><EditorBtn><PropsI /></EditorBtn></div>
        <div className={"ml-[8px] w-[180px] " + GRP}>
          <TabIco on><Cam /></TabIco>
          <TabIco><Pics /></TabIco>
          <TabIco><SceneI /></TabIco>
          <TabIco><Globe /></TabIco>
          <TabIco><Cube /></TabIco>
          <TabIco><LinkI /></TabIco>
          <TabIco><MovieCam c="#8a8a8a" /></TabIco>
          <TabIco><Checker /></TabIco>
          <TabIco><Tick /></TabIco>
        </div>
      </div>
      <div className="absolute left-[228px] top-[32px] w-[12px] bottom-[4px] rounded-full bg-[#666666]">
        <div className="h-[467px] rounded-full bg-linear-to-r from-[#8e8e8e] to-[#7c7c7c]" />
      </div>
      <div className="flex flex-col w-[211px] ml-[8px] shrink-0">
        <div className="flex items-center h-[18px] mt-[10px] pl-[2px] text-[#111111] shrink-0">
          <Pin /><span className="ml-[4px]"><SceneI s={16} /></span><span className="ml-[5px]">Scene</span>
        </div>
        <Line cls="mt-[8px] -mx-[3px] w-[218px]" />
        <div className="mt-px"><PanelHead open label="Render" /></div>
        <div className={"mt-[10px] " + GRP}>
          <div className={LCELL + " w-[69px] gap-[6px] pl-[3px] " + BTN}><Cam star />Render</div>
          <div className={LCELL + " w-[71px] pl-[2px] whitespace-nowrap " + BTN + " " + SEP}><Clap />Animation</div>
          <div className={LCELL + " flex-1 pl-[2px] gap-[10px] " + BTN + " " + SEP}><Speaker />Audio</div>
        </div>
        <div className="flex items-center mt-[5px] h-[20px] shrink-0">
          <span className="pl-[7px] w-[75px] text-[#111111]">Display:</span>
          <div className={"flex w-[136px] " + GRP}>
            <div className={"flex items-center justify-between w-[118px] h-full px-[6px] shrink-0 " + MENU}>Image Editor<UpDown /></div>
            <div className={CELL + " flex-1 " + BTN + " " + SEP}><Lock open /></div>
          </div>
        </div>
        <Line cls="mt-[8px] -mx-[3px] w-[218px]" />
        <div className="mt-px"><PanelHead open label="Dimensions" /></div>
        <div className={"mt-[10px] " + GRP}>
          <div className={"flex items-center justify-between w-[171px] h-full px-[6px] shrink-0 " + MENU}>Render Presets<UpDown /></div>
          <div className={CELL + " w-[20px] " + BTN + " " + SEP}><Plus /></div>
          <div className={CELL + " flex-1 " + BTN + " " + SEP}><Minus /></div>
        </div>
        <div className="grid grid-cols-[102px_101px] gap-x-[8px] mt-[8px] shrink-0">
          <div className="flex flex-col">
            <Label>Resolution:</Label>
            <NumGroup cls="mt-px">
              <Num label="X:" value="1920 px" />
              <Num label="Y:" value="1080 px" sep />
              <div className="relative flex h-[19px] border-t border-[#2c2c2c] bg-[#ababab]">
                <div className="w-[63px] bg-[#767676]" />
                <span className="absolute right-[15px] top-[2px] text-[#111111]">60%</span>
              </div>
            </NumGroup>
            <div className="mt-[4px]"><Label>Aspect Ratio:</Label></div>
            <NumGroup cls="mt-px">
              <Num label="X:" value="1.000" />
              <Num label="Y:" value="1.000" sep />
            </NumGroup>
            <div className="flex items-center mt-[3px] h-[20px]">
              <CheckRow label="Bor" cls="w-[55px]" />
              <CheckRow label="Cro" dim />
            </div>
          </div>
          <div className="flex flex-col">
            <Label>Frame Range:</Label>
            <NumGroup cls="mt-px">
              <Num label="Start Frame:" value="1" />
              <Num label="End Fra:" value="250" sep />
              <Num label="Frame Step:" value="1" sep />
            </NumGroup>
            <div className="mt-[4px]"><Label>Frame Rate:</Label></div>
            <div className={"mt-px flex items-center justify-between h-[20px] px-[6px] rounded-[5px] border border-[#2c2c2c] " + MENU}>24 fps<UpDown /></div>
            <div className="mt-[3px]"><Label>Time Remapping:</Label></div>
            <div className={"mt-px flex h-[20px] border border-[#2c2c2c] rounded-[9px] overflow-hidden " + NUM}>
              <div className="flex items-center justify-between flex-1 px-[5px]"><ArrL />100<ArrR /></div>
              <div className={"flex items-center justify-between flex-1 px-[5px] " + SEP}><ArrL />100<ArrR /></div>
            </div>
          </div>
        </div>
        <Line cls="mt-[7px] -mx-[3px] w-[218px]" />
        <div className="mt-px"><PanelHead open label="Anti-Aliasing" check /></div>
        <div className="grid grid-cols-[102px_101px] gap-x-[8px] mt-[10px] shrink-0">
          <div className={GRP}>
            <div className={CELL + " w-[24px] text-white " + MENU}>5</div>
            <div className={CELL + " w-[26px] text-white bg-[#5680c2] " + SEP}>8</div>
            <div className={CELL + " w-[25px] text-white " + MENU + " " + SEP}>11</div>
            <div className={CELL + " flex-1 text-white " + MENU + " " + SEP}>16</div>
          </div>
          <div className={"flex items-center justify-between h-[20px] pl-[6px] pr-[5px] rounded-[5px] border border-[#2c2c2c] whitespace-nowrap " + MENU}>Mitchell-Netra...<UpDown /></div>
          <CheckRow label="Full Sample" cls="mt-[2px]" />
          <div className="mt-[2px]"><NumGroup><Num label="Size:" value="1.000 px" /></NumGroup></div>
        </div>
        <Line cls="mt-[7px] -mx-[3px] w-[218px]" />
        <div className="mt-px"><PanelHead label="Sampled Motion Blur" check={false} /></div>
        <Line cls="mt-[2px] -mx-[3px] w-[218px]" />
        <div className="mt-px"><PanelHead label="Shading" /></div>
        <Line cls="mt-[2px] -mx-[3px] w-[218px]" />
        <div className="mt-px"><PanelHead label="Performance" /></div>
        <Line cls="mt-[2px] -mx-[3px] w-[218px]" />
        <div className="mt-px"><PanelHead open label="Post Processing" /></div>
        <div className="grid grid-cols-[102px_101px] gap-x-[8px] mt-[11px] shrink-0">
          <CheckRow on label="Compositing" white />
          <div className={"relative flex items-center h-[20px] border border-[#2c2c2c] rounded-[9px] overflow-hidden pl-[14px] pr-[12px] justify-between " + NUM}>
            <div className="absolute left-0 top-0 bottom-0 w-[9px] bg-[#777777]" />
            <span>Dither:</span><span>0.000</span>
          </div>
          <CheckRow on label="Sequencer" white cls="mt-[2px]" />
        </div>
        <div className="grid grid-cols-[102px_101px] gap-x-[8px] mt-[16px] shrink-0">
          <CheckRow label="Fields" />
          <CheckRow label="Edge" />
          <div className="flex h-[20px] mt-px border border-[#2c2c2c] rounded-[5px] overflow-hidden whitespace-nowrap">
            <div className={CELL + " w-[50px] bg-[#5a7ba8] text-[#1f2a3a]"}>Upper Fir</div>
            <div className={CELL + " flex-1 bg-[#5c5c5c] text-[#a8a8a8]"}>Lower Fir</div>
          </div>
          <div className="relative flex items-center justify-between h-[20px] mt-px pl-[14px] pr-[14px] border border-[#3e3e3e] rounded-[9px] overflow-hidden bg-[#828282] text-[#444444]">
            <div className="absolute left-0 top-0 bottom-0 w-[12px] bg-[#6a6a6a]" />
            <span className="relative">Threshold:</span><span>10</span>
          </div>
          <CheckRow label="Still" dim cls="mt-[3px]" />
          <div className="h-[19px] mt-[2px] rounded-[4px] bg-[#3f3f3f] border border-[#4c4c4c]" />
        </div>
      </div>
    </div>
  );
}

export default function App() {
  return (
    <div className="flex flex-col w-[1849px] h-[1053px] overflow-hidden bg-[#727272] font-['Noto_Sans',sans-serif] text-[11px] leading-[14px]">
      <TitleBar />
      <InfoBar />
      <div className="h-px bg-black shrink-0" />
      <div className="flex flex-1 min-h-0">
        <div className="flex flex-col w-[1603px] shrink-0">
          <div className="flex flex-1 min-h-0">
            <ToolShelf />
            <Viewport />
          </div>
          <Header3D />
          <Timeline />
          <HeaderTime />
        </div>
        <div className="w-px bg-black shrink-0" />
        <div className="flex flex-col flex-1 min-w-0">
          <Outliner />
          <div className="h-px bg-black shrink-0" />
          <Properties />
        </div>
      </div>
    </div>
  );
}
